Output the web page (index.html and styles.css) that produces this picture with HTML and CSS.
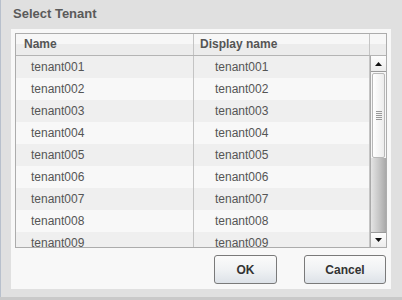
FILE: index.html
```html
<!DOCTYPE html>
<html>
<head>
<meta charset="utf-8">
<link rel="stylesheet" href="styles.css">
</head>
<body>
<div class="window">
  <div class="title">Select Tenant</div>
  <div class="panel">
    <div class="table">
      <div class="thead">
        <div class="th c1">Name</div>
        <div class="th c2">Display name</div>
        <div class="th c3"></div>
      </div>
      <div class="tbody">
        <div class="rows">
          <div class="row odd"><div class="td c1">tenant001</div><div class="td c2">tenant001</div></div>
          <div class="row"><div class="td c1">tenant002</div><div class="td c2">tenant002</div></div>
          <div class="row odd"><div class="td c1">tenant003</div><div class="td c2">tenant003</div></div>
          <div class="row"><div class="td c1">tenant004</div><div class="td c2">tenant004</div></div>
          <div class="row odd"><div class="td c1">tenant005</div><div class="td c2">tenant005</div></div>
          <div class="row"><div class="td c1">tenant006</div><div class="td c2">tenant006</div></div>
          <div class="row odd"><div class="td c1">tenant007</div><div class="td c2">tenant007</div></div>
          <div class="row"><div class="td c1">tenant008</div><div class="td c2">tenant008</div></div>
          <div class="row odd"><div class="td c1">tenant009</div><div class="td c2">tenant009</div></div>
        </div>
        <div class="scrollbar">
          <div class="sbtn"><svg width="7" height="4" viewBox="0 0 7 4"><path d="M3.5 0 L7 4 L0 4 Z" fill="#111"/></svg></div>
          <div class="thumb"><div class="grip"></div></div>
          <div class="track"></div>
          <div class="sbtn down"><svg width="7" height="4" viewBox="0 0 7 4"><path d="M0 0 L7 0 L3.5 4 Z" fill="#111"/></svg></div>
        </div>
      </div>
    </div>
    <div class="buttons">
      <div class="btn ok">OK</div>
      <div class="btn cancel">Cancel</div>
    </div>
  </div>
</div>
</body>
</html>
```
FILE: styles.css
```css
* { box-sizing: border-box; }
html, body { margin: 0; padding: 0; }
body {
  width: 402px;
  height: 300px;
  background: #c9c9c9;
  font-family: "Liberation Sans", Arial, sans-serif;
  overflow: hidden;
}
.window {
  width: 402px;
  height: 297px;
  background: #e0e0e0;
  border-left: 1px solid #b8c0cc;
  display: flex;
  flex-direction: column;
}
.title {
  height: 29px;
  padding-left: 12px;
  font-size: 13px;
  font-weight: bold;
  color: #5a5a5a;
  line-height: 27px;
}
.panel {
  margin: 0 11px 0 10px;
  height: 260px;
  background: #f8f8f8;
  padding: 4px 4px 5px 4px;
  display: flex;
  flex-direction: column;
}
.table {
  width: 372px;
  height: 215px;
  border: 1px solid #acacac;
  display: flex;
  flex-direction: column;
  background: #f7f7f7;
}
.thead {
  height: 22px;
  display: flex;
  border-bottom: 1px solid #b4b4b4;
  background: linear-gradient(#f7f7f7 0, #f7f7f7 50%, #ececec 50%, #ececec 100%);
}
.th {
  font-size: 12px;
  font-weight: bold;
  color: #555;
  line-height: 21px;
  padding-left: 8px;
}
.c1 { width: 178px; border-right: 1px solid #c4c4c4; }
.c2 { width: 176px; border-right: 1px solid #c4c4c4; }
.th.c2 { padding-left: 6px; }
.c3 { flex: 1; padding: 0; border-right: none; }
.tbody {
  flex: 1;
  display: flex;
  overflow: hidden;
}
.rows {
  width: 354px;
  overflow: hidden;
}
.row {
  height: 22px;
  display: flex;
  background: #f8f8f8;
}
.row.odd { background: #efefef; }
.td {
  font-size: 12px;
  color: #555;
  line-height: 22px;
  padding-left: 15px;
}
.td.c2 { padding-left: 21px; }
.scrollbar {
  flex: 1;
  display: flex;
  flex-direction: column;
  border-left: 1px solid #aaa;
}
.sbtn {
  height: 16px;
  background: linear-gradient(#fdfdfd, #ececec);
  border-bottom: 1px solid #9a9a9a;
  display: flex;
  align-items: center;
  justify-content: center;
}
.sbtn.down { border-bottom: none; border-top: 1px solid #9a9a9a; height: 15px; }
.thumb {
  height: 85px;
  margin: 1px 1px 0 1px;
  border: 1px solid #b8b8b8;
  border-radius: 2px;
  background: linear-gradient(90deg, #ffffff, #ececec);
  display: flex;
  align-items: center;
  justify-content: center;
}
.grip {
  width: 6px;
  height: 9px;
  background: repeating-linear-gradient(#999 0, #999 1px, transparent 1px, transparent 2px);
}
.track {
  flex: 1;
  background: linear-gradient(90deg, #e4e4e4, #c8c8c8 50%, #a8a8a8);
}
.buttons {
  display: flex;
  justify-content: flex-end;
  gap: 27px;
  margin-top: 7px;
  padding-right: 1px;
}
.btn {
  height: 29px;
  border: 1px solid #7a7a7a;
  border-radius: 3px;
  background: linear-gradient(#fbfbfb, #f0f2f4 50%, #dde2e8);
  font-size: 12px;
  font-weight: bold;
  color: #333;
  display: flex;
  align-items: center;
  justify-content: center;
}
.ok { width: 63px; }
.cancel { width: 82px; }
```
